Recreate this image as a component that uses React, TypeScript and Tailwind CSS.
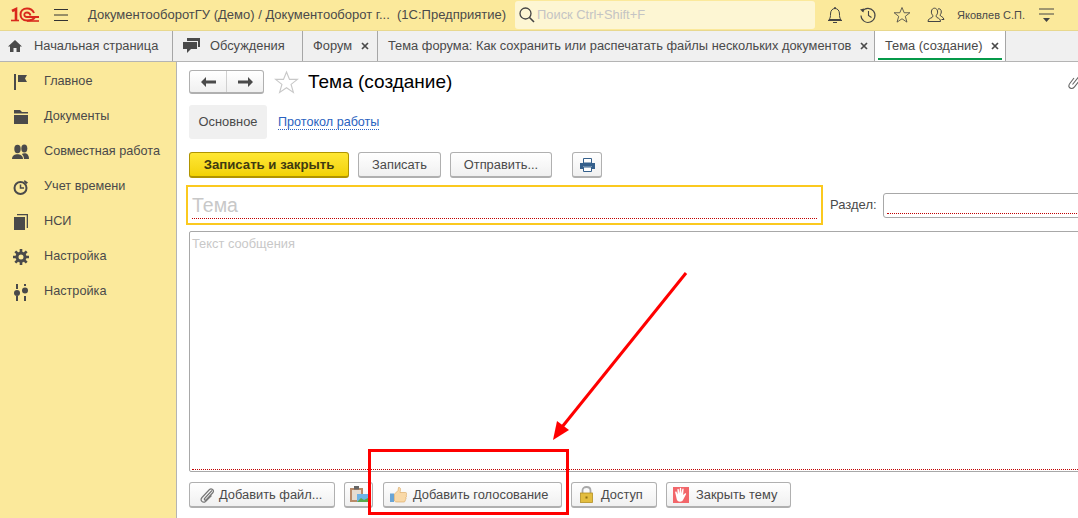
import React from "react";

const Logo = () => (
  <svg width="30" height="18" viewBox="0 0 30 18" fill="none" className="shrink-0">
    <path d="M2 5 L6 3 V14" stroke="#d9291c" strokeWidth="2.6" />
    <path d="M1 14.5 H9" stroke="#d9291c" strokeWidth="1.6" />
    <path d="M25 11 C23.5 14 20 14.5 17 14.5 C12.5 14.5 10.5 11.5 10.5 8.5 C10.5 5 13 2.5 17 2.5 C21 2.5 23 4.5 24 7" stroke="#d9291c" strokeWidth="2" />
    <path d="M20.5 9.5 C20 7.8 18.8 6.5 17 6.5 C15.3 6.5 14.3 7.5 14.3 8.8 C14.3 10 15.5 11 17 11 H29" stroke="#d9291c" strokeWidth="1.8" />
    <path d="M17 15 H29" stroke="#d9291c" strokeWidth="1.6" />
  </svg>
);

const Burger = () => (
  <svg width="14" height="12" viewBox="0 0 14 12" className="shrink-0">
    <path d="M0 .5H14M0 6H14M0 11.5H14" stroke="#333" strokeWidth="1" />
  </svg>
);

const Search = () => (
  <svg width="18" height="18" viewBox="0 0 18 18" fill="none" className="shrink-0">
    <circle cx="7.5" cy="7.5" r="5.5" stroke="#444" strokeWidth="1.3" />
    <path d="M11.5 11.5L16 16" stroke="#444" strokeWidth="1.6" />
  </svg>
);

const Bell = () => (
  <svg width="16" height="18" viewBox="0 0 16 18" fill="none">
    <path d="M2 13.5C3.5 12 3.5 10 3.5 8C3.5 4.5 5.5 2.5 8 2.5S12.5 4.5 12.5 8C12.5 10 12.5 12 14 13.5H2Z" stroke="#444" strokeWidth="1" />
    <path d="M1 14.5H15" stroke="#444" strokeWidth="1" />
    <path d="M6 16H10V17H6Z" fill="#444" />
    <path d="M7 2H9" stroke="#444" strokeWidth="1.5" />
  </svg>
);

const History = () => (
  <svg width="18" height="18" viewBox="0 0 18 18" fill="none">
    <path d="M3.2 5.5A7 7 0 1 1 2 9.5" stroke="#444" strokeWidth="1.1" />
    <path d="M1 3.5L4.5 6.5L5 2.5Z" fill="#444" />
    <path d="M9.5 5V9.5L12.5 11.5" stroke="#444" strokeWidth="1.1" />
  </svg>
);

const Star = ({ size, color }: { size: number; color: string }) => (
  <svg width={size} height={size} viewBox="0 0 24 24" fill="none">
    <path d="M12 2L14.9 9H22.5L16.4 13.8L18.6 21.5L12 17L5.4 21.5L7.6 13.8L1.5 9H9.1Z" stroke={color} strokeWidth="1.1" />
  </svg>
);

const Users = () => (
  <svg width="18" height="16" viewBox="0 0 18 16" fill="none">
    <path d="M1 14.5C1 12 3 11.5 5 10.5C6 10 6 8.5 5.5 8C4.5 7 4.2 5.5 4.5 4C4.8 2.2 6 1.2 7.5 1.2S10.2 2.2 10.5 4C10.8 5.5 10.5 7 9.5 8C9 8.5 9 10 10 10.5C12 11.5 13.5 12 13.5 14.5Z" stroke="#444" strokeWidth="1" />
    <path d="M11 2C12.5 1.2 14.5 2.5 14.3 5C14.2 6.5 13.5 7.5 13 8C13 9.5 16.5 9.5 17 12.5H14.5" stroke="#444" strokeWidth="1" />
  </svg>
);

const LinkIcon = () => (
  <svg width="14" height="16" viewBox="0 0 14 16" fill="none" className="shrink-0">
    <path d="M6 4L1.8 9.5C0 12 1 14 3 14.4C4.5 14.7 5.5 14 6.5 12.8L12 6M4.5 10.5L11 2.5C12.5 1 14 1 15 2" stroke="#666" strokeWidth="1.1" />
  </svg>
);

const SideIcon = ({ name }: { name: string }) => {
  const c = "#4a4a4a";
  if (name === "flag")
    return (
      <svg width="16" height="16" viewBox="0 0 16 16">
        <path d="M1 0H3V16H1Z M5 1H14L12 4.5L14 8H5Z" fill={c} />
      </svg>
    );
  if (name === "folder")
    return (
      <svg width="16" height="16" viewBox="0 0 16 16">
        <path d="M1 1H7L9 3H15V4.5H1Z M1 6H15V15H1Z" fill={c} />
      </svg>
    );
  if (name === "people")
    return (
      <svg width="17" height="16" viewBox="0 0 17 16">
        <ellipse cx="5.5" cy="5" rx="3.2" ry="4.2" fill={c} />
        <path d="M0 15C0 11.5 3 10.3 5.5 10.3S11 11.5 11 15Z" fill={c} />
        <ellipse cx="12.3" cy="4.5" rx="3" ry="4" fill={c} />
        <path d="M12 15C12 12.5 11 11 9.8 9.9C10.5 9.5 11.5 9.3 12.5 9.3C15 9.3 17 11 17 15Z" fill={c} />
      </svg>
    );
  if (name === "timer")
    return (
      <svg width="16" height="16" viewBox="0 0 16 16" fill="none">
        <circle cx="7.5" cy="9" r="6" stroke={c} strokeWidth="2" />
        <path d="M7.5 5.5V9H11" stroke={c} strokeWidth="1.5" />
        <path d="M11.5 1L15 3.5L13.5 5L11 3Z" fill={c} />
      </svg>
    );
  if (name === "copy")
    return (
      <svg width="16" height="16" viewBox="0 0 16 16">
        <path d="M1 3H12V16H1Z M4 0H15V14H13.7V1.3H4Z" fill={c} />
      </svg>
    );
  if (name === "gear")
    return (
      <svg width="16" height="16" viewBox="0 0 16 16" fill="none">
        <circle cx="8" cy="8" r="4" stroke={c} strokeWidth="3" />
        <path d="M8 0V3M8 13V16M0 8H3M13 8H16M2.3 2.3L4.5 4.5M11.5 11.5L13.7 13.7M13.7 2.3L11.5 4.5M4.5 11.5L2.3 13.7" stroke={c} strokeWidth="2.6" />
      </svg>
    );
  return (
    <svg width="16" height="18" viewBox="0 0 16 18">
      <path d="M3 1H5V6H3Z M11 1H13V3H11Z M11 13H13V18H11Z M3 13H5V18H3Z" fill={c} />
      <circle cx="4" cy="10" r="3" fill={c} />
      <circle cx="12" cy="7.5" r="3" fill={c} />
    </svg>
  );
};

const Close = () => (
  <svg width="8" height="8" viewBox="0 0 8 8" className="shrink-0">
    <path d="M1 1L7 7M7 1L1 7" stroke="#4a4a4a" strokeWidth="1.7" />
  </svg>
);

const Tab = ({ icon, label, close, active, width }: { icon?: React.ReactNode; label: string; close?: boolean; active?: boolean; width: string }) => (
  <div className={`relative flex h-full shrink-0 items-center border-r border-[#a6a6a6] ${width} ${active ? "bg-white" : ""}`}>
    {icon}
    <span className="whitespace-nowrap">{label}</span>
    {close && <span className="ml-auto"><Close /></span>}
    {active && <div className="absolute bottom-[1px] left-[3px] right-[3px] h-[2px] bg-[#059a4a]" />}
  </div>
);

const sideItems = [
  ["flag", "Главное"],
  ["folder", "Документы"],
  ["people", "Совместная работа"],
  ["timer", "Учет времени"],
  ["copy", "НСИ"],
  ["gear", "Настройка"],
  ["sliders", "Настройка"],
];

const Btn = ({ children, className }: { children: React.ReactNode; className: string }) => (
  <div className={`flex h-[26px] shrink-0 items-center rounded-[3px] border border-[#b0b0b0] border-b-[2px] bg-gradient-to-b from-white to-[#f0f0f0] text-[#4a4a4a] ${className}`}>
    {children}
  </div>
);

const Clip = () => (
  <svg width="16" height="16" viewBox="0 0 16 16" fill="none">
    <path d="M13 3.5L6 11C4.5 12.5 6 14 7.5 12.5L14 5.5C15.5 3.5 12.5 .5 10.5 2.5L3 10.5C.5 13.5 4 16.5 6.5 14.5L12.5 8.5" stroke="#777" strokeWidth="1.2" />
  </svg>
);

const Clipboard = () => (
  <svg width="18" height="17" viewBox="0 0 18 17">
    <path d="M0 2H13V16H0Z" fill="#b98a68" />
    <path d="M2 4H11V14H2Z" fill="#e6dcd0" />
    <path d="M4 0H9V3.5H4Z" fill="#666" />
    <path d="M7 8H18V16H7Z" fill="#6fb4e6" />
    <path d="M7 16L11 12L14 14L18 12V16Z" fill="#5aa84a" />
  </svg>
);

const Thumb = () => (
  <svg width="17" height="16" viewBox="0 0 17 16">
    <path d="M0 6.5H4V15H0Z" fill="#6aa5d6" />
    <path d="M4.5 7L8 3.5L8.5 0.5C10.5 0 11 2 10 5.5H15.5C17 5.5 17 7.5 16 8C17 9 16.5 10 15.8 10.5C16.3 11.5 16 12.5 15.2 13C15.5 14.5 14.5 15 13.5 15H7C5.5 15 5 14.5 4.5 14Z" fill="#f9d9a8" stroke="#d9a45c" strokeWidth=".6" />
  </svg>
);

const Lock = () => (
  <svg width="13" height="17" viewBox="0 0 13 17" fill="none">
    <path d="M2.5 7V4.5C2.5 2.2 4.2 1 6.5 1S10.5 2.2 10.5 4.5V7" stroke="#a9a9a9" strokeWidth="1.8" />
    <rect x=".5" y="7" width="12" height="9.5" fill="#e3bd3f" stroke="#b48f22" strokeWidth=".8" />
    <rect x="5.5" y="10.5" width="2" height="2" fill="#8a6c12" />
  </svg>
);

const Hand = () => (
  <svg width="16" height="16" viewBox="0 0 16 16">
    <rect width="16" height="16" fill="#f2666a" />
    <path d="M3 9L2.2 5.5C2 4.5 3.2 4.2 3.6 5L4.6 7.5L4.4 2.5C4.4 1.5 5.7 1.5 5.8 2.5L6.4 6.5L6.8 1.5C6.9 .5 8.2 .5 8.2 1.5L8.3 6.5L9.3 2.2C9.6 1.2 10.8 1.6 10.6 2.6L10.1 8L11.8 6.5C12.7 5.8 13.5 6.7 12.9 7.5L10 13C9 15 5 15.5 3.8 12.5Z" fill="#fff" />
  </svg>
);

const Printer = () => (
  <svg width="15" height="14" viewBox="0 0 15 14">
    <path d="M3.5 .5H11.5V5H3.5Z" fill="#fff" stroke="#35608c" />
    <path d="M0 5H15V11H12V8.5H3V11H0Z" fill="#35608c" />
    <path d="M3.5 9H11.5V13.5H3.5Z" fill="#fff" stroke="#35608c" />
  </svg>
);

export default function App() {
  return (
    <div className="relative flex h-[518px] w-[1078px] flex-col overflow-hidden bg-white font-['Liberation_Sans',Arial,sans-serif] text-[12.85px] text-[#4a4a4a]">
      {/* шапка */}
      <header className="flex h-[30px] shrink-0 items-center bg-[#fbe99b] pl-[10px] text-[13px] text-[#4a4a4a]">
        <Logo />
        <div className="ml-[14px]"><Burger /></div>
        <span className="ml-[20px] w-[309px] shrink-0 whitespace-nowrap">ДокументооборотГУ (Демо) / Документооборот г...</span>
        <span className="w-[118px] shrink-0 whitespace-nowrap">(1С:Предприятие)</span>
        <div className="flex h-[28px] w-[300px] shrink-0 items-center gap-[1px] rounded-[3px] bg-[#fdf6d3] pl-[3px] text-[12.9px] text-[#c4c4c4]">
          <Search />
          <span className="whitespace-nowrap">Поиск Ctrl+Shift+F</span>
        </div>
        <div className="ml-[12px] flex items-center gap-[16px]">
          <Bell />
          <History />
          <Star size={18} color="#444" />
          <Users />
        </div>
        <span className="ml-[12px] whitespace-nowrap text-[11px]">Яковлев С.П.</span>
        <svg width="15" height="14" viewBox="0 0 15 14" className="ml-[14px]">
          <path d="M0 1H15M0 6H15" stroke="#444" />
          <path d="M4 10H11L7.5 14Z" fill="#444" />
        </svg>
      </header>

      {/* вкладки */}
      <nav className="flex h-[32px] shrink-0 items-center border-t border-b border-[#b4b4b4] border-t-[#e8d88e] bg-[#f0f0f0]">
        <Tab
          width="w-[173px]"
          label="Начальная страница"
          icon={
            <svg width="14" height="12" viewBox="0 0 14 12" className="ml-[8px] mr-[12px]">
              <path d="M7 0L14 6.5H12V12H8.5V8H5.5V12H2V6.5H0Z" fill="#4a4a4a" />
            </svg>
          }
        />
        <Tab
          width="w-[130px]"
          label="Обсуждения"
          icon={
            <svg width="17" height="16" viewBox="0 0 17 16" className="ml-[10px] mr-[10px]">
              <path d="M4 0H17V9H15V3H4Z M0 4H14V11H8L4 15V11H0Z" fill="#4a4a4a" />
            </svg>
          }
        />
        <Tab width="w-[75px] pl-[10px] pr-[8px]" label="Форум" close />
        <Tab width="w-[497px] pl-[10px] pr-[6px]" label="Тема форума: Как сохранить или распечатать файлы нескольких документов" close />
        <Tab width="w-[131px] pl-[10px] pr-[6px]" label="Тема (создание)" close active />
      </nav>

      <div className="flex min-h-0 flex-1">
        {/* меню */}
        <aside className="w-[177px] shrink-0 border-r border-[#b4b4b4] bg-[#fbe99b] pt-[2px] text-[12.7px]">
          {sideItems.map(([icon, label], i) => (
            <div key={i} className="flex h-[35px] items-center">
              <div className="flex w-[44px] justify-center pl-[1px] pr-[4px]"><SideIcon name={icon} /></div>
              <span className="whitespace-nowrap">{label}</span>
            </div>
          ))}
        </aside>

        {/* форма */}
        <main className="flex min-w-0 flex-1 flex-col overflow-hidden pl-[12px] pt-[8px]">
          <div className="flex h-[24px] items-center">
            <div className="flex h-[24px] w-[75px] shrink-0 items-center rounded-[3px] border border-[#b0b0b0] border-b-[2px] bg-gradient-to-b from-white to-[#f0f0f0]">
              <div className="flex h-full w-[37px] items-center justify-center border-r border-[#d0d0d0]">
                <svg width="15" height="10" viewBox="0 0 15 10"><path d="M0 5L5 0V3.5H15V6.5H5V10Z" fill="#4a4a4a" /></svg>
              </div>
              <div className="flex flex-1 items-center justify-center">
                <svg width="15" height="10" viewBox="0 0 15 10"><path d="M15 5L10 0V3.5H0V6.5H10V10Z" fill="#4a4a4a" /></svg>
              </div>
            </div>
            <div className="ml-[10px] shrink-0"><Star size={25} color="#c8c8c8" /></div>
            <h1 className="ml-[9px] w-[143px] shrink-0 whitespace-nowrap pt-[1px] text-[19px] text-black">Тема (создание)</h1>
            <div className="ml-[617px] shrink-0"><LinkIcon /></div>
          </div>

          <div className="mt-[11px] flex items-center">
            <div className="flex h-[34px] w-[78px] items-center justify-center rounded-[3px] bg-[#f0f0f0]">Основное</div>
            <span className="ml-[11px] border-b border-dotted border-[#2a62c0] text-[12.6px] leading-[14px] text-[#2a62c0]">Протокол работы</span>
          </div>

          <div className="mt-[13px] flex items-center">
            <div className="flex h-[26px] w-[160px] items-center justify-center rounded-[3px] border border-[#b09400] border-b-[2px] bg-gradient-to-b from-[#ffe733] to-[#f2d200] text-[13.2px] font-bold text-[#3f3a10]">
              Записать и закрыть
            </div>
            <Btn className="ml-[9px] w-[83px] justify-center">Записать</Btn>
            <Btn className="ml-[9px] w-[102px] justify-center">Отправить...</Btn>
            <Btn className="ml-[20px] w-[30px] justify-center"><Printer /></Btn>
          </div>

          <div className="ml-[-3px] mt-[7px] flex items-center">
            <div className="flex h-[40px] w-[637px] shrink-0 border-[2px] border-[#fbc91f] px-[4px] pt-[2px]">
              <div className="h-[30px] w-full border-b border-dotted border-[#c00000] text-[19.5px] leading-[33px] text-[#c8c8c8]">Тема</div>
            </div>
            <span className="ml-[7px] w-[53px] shrink-0 text-[13px]">Раздел:</span>
            <div className="h-[25px] w-[300px] shrink-0 rounded-[3px] border border-[#a8a8a8] px-[3px]">
              <div className="h-[20px] border-b border-dotted border-[#c00000]" />
            </div>
          </div>

          <div className="mt-[6px] h-[241px] w-[1000px] shrink-0 rounded-[2px] border border-[#a8a8a8] px-[2px] pt-[2px]">
            <div className="h-[236px] border-b border-dotted border-[#c00000] text-[#c8c8c8]">Текст сообщения</div>
          </div>

          <div className="mt-[10px] flex items-center">
            <Btn className="w-[146px] pl-[9px]"><Clip /><span className="ml-[4px]">Добавить файл...</span></Btn>
            <Btn className="ml-[9px] w-[29px] justify-center"><Clipboard /></Btn>
            <Btn className="ml-[10px] w-[179px] pl-[6px]"><Thumb /><span className="ml-[6px]">Добавить голосование</span></Btn>
            <Btn className="ml-[9px] w-[86px] pl-[8px]"><Lock /><span className="ml-[8px]">Доступ</span></Btn>
            <Btn className="ml-[9px] w-[125px] pl-[6px]"><Hand /><span className="ml-[7px]">Закрыть тему</span></Btn>
          </div>
        </main>
      </div>

      {/* пометка поверх скриншота */}
      <div className="absolute left-[368px] top-[449px] h-[66px] w-[201px] border-[3px] border-[#ff0000]" />
      <svg className="absolute left-[540px] top-[265px]" width="155" height="185" viewBox="0 0 155 185">
        <path d="M146 8L18 167" stroke="#ff0000" strokeWidth="3" />
        <path d="M13 175L17 156L29 165Z" fill="#ff0000" />
      </svg>
    </div>
  );
}
